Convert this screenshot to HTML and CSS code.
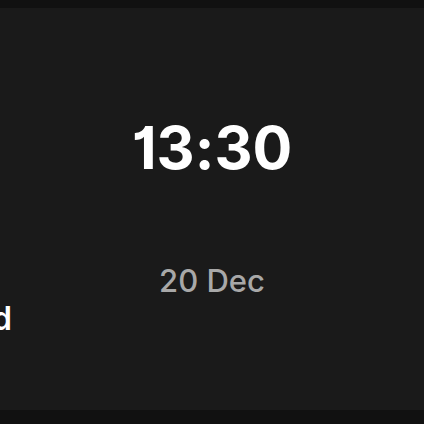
FILE: index.html
```html
<!DOCTYPE html>
<html>
<head>
<meta charset="utf-8">
<link rel="stylesheet" href="styles.css">
</head>
<body>
<main class="panel">
  <div class="clock">
    <div class="time">13:30</div>
    <div class="date">20 Dec</div>
  </div>
  <div class="status"><span class="status-text">Scheduled</span></div>
</main>
</body>
</html>
```
FILE: styles.css
```css
html, body {
  margin: 0;
  padding: 0;
  background: #111111;
  height: 100%;
}
body {
  padding-top: 8px;
  box-sizing: border-box;
  font-family: Inter, "Noto Sans", sans-serif;
}
.panel {
  height: 402px;
  background: #1a1a1a;
  overflow: hidden;
  display: flex;
  flex-direction: column;
}
.clock {
  display: flex;
  flex-direction: column;
  align-items: center;
  padding-top: 100px;
}
.time {
  color: #ffffff;
  font-weight: 700;
  font-size: 59px;
  line-height: 80px;
  font-feature-settings: "cv01" 1, "calt" 0;
}
.date {
  color: #a8a8a8;
  font-weight: 500;
  font-size: 31px;
  line-height: 40px;
  margin-top: 73px;
}
.status {
  align-self: flex-end;
  width: 0;
  display: flex;
  justify-content: flex-end;
  margin-right: 412px;
  color: #ffffff;
  font-weight: 600;
  font-size: 32px;
  line-height: 36px;
  white-space: nowrap;
}
```
